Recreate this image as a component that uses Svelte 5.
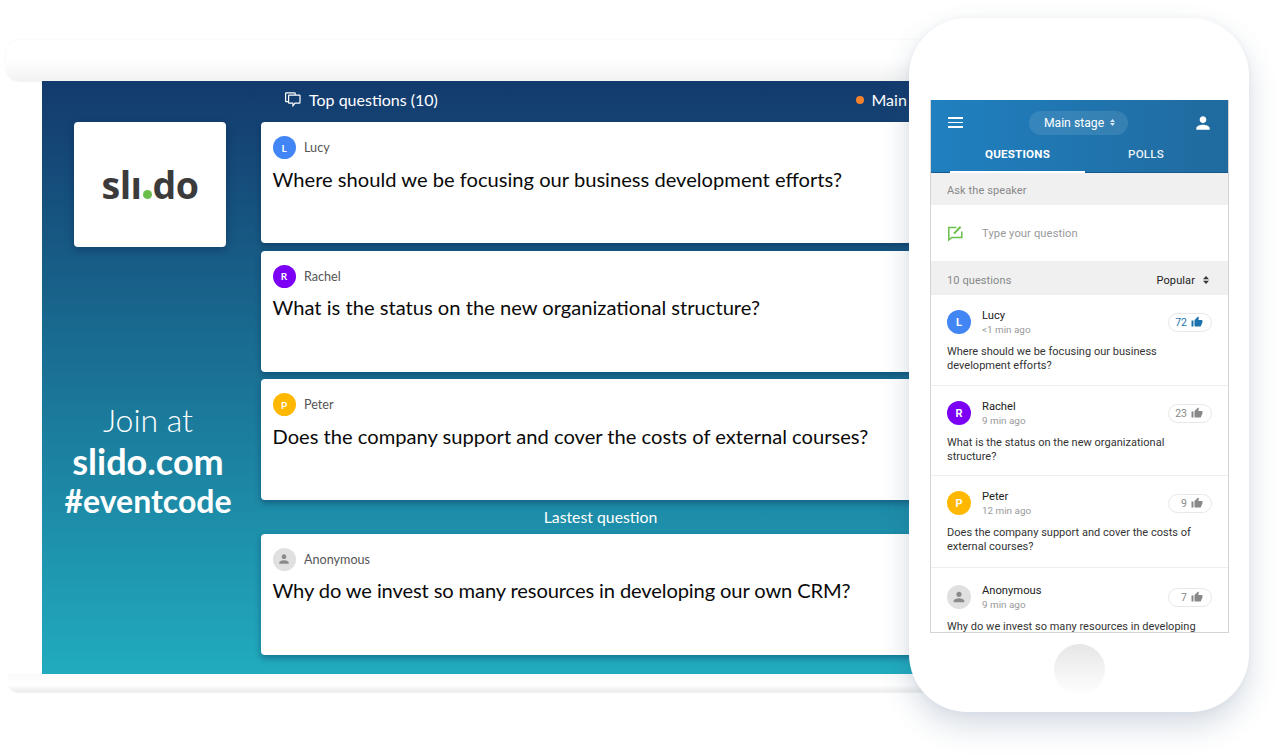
<script>
  const thumb = "M1 21h4V9H1v12zm22-11c0-1.1-.9-2-2-2h-6.31l.95-4.57.03-.32c0-.41-.17-.79-.44-1.06L14.17 1 7.59 7.59C7.22 7.95 7 8.45 7 9v10c0 1.1.9 2 2 2h9c.83 0 1.54-.5 1.84-1.22l3.02-7.05c.09-.23.14-.47.14-.73v-2z";
  const person = "M12 12c2.21 0 4-1.79 4-4s-1.79-4-4-4-4 1.79-4 4 1.79 4 4 4zm0 2c-2.67 0-8 1.34-8 4v2h16v-2c0-2.66-5.33-4-8-4z";
  const top3 = [
    { name: "Lucy", letter: "L", color: "#4285f4", text: "Where should we be focusing our business development efforts?" },
    { name: "Rachel", letter: "R", color: "#7b00f5", text: "What is the status on the new organizational structure?" },
    { name: "Peter", letter: "P", color: "#ffb700", text: "Does the company support and cover the costs of external courses?" }
  ];
  const latest = { name: "Anonymous", letter: "", color: "#e0e0e0", text: "Why do we invest so many resources in developing our own CRM?" };
  const items = [
    { ...top3[0], time: "<1 min ago", votes: 72, on: true, h: 91, pad: 12 },
    { ...top3[1], time: "9 min ago", votes: 23, h: 90, pad: 12 },
    { ...top3[2], time: "12 min ago", votes: 9, h: 92, pad: 12 },
    { ...latest, time: "9 min ago", votes: 7, h: 65, pad: 14 }
  ];
</script>

<div class="stage">
  <div class="laptop">
    <div class="lid"></div>
    <div class="screen">
      <aside class="side">
        <div class="logo"><span class="sl">slı</span><i class="dot"></i><span class="sl">do</span></div>
        <div class="join">
          <div class="light">Join at</div>
          <div class="bold big">slido.com</div>
          <div class="bold">#eventcode</div>
        </div>
      </aside>
      <section class="col">
        <header class="top">
          <span class="title">
            <svg width="16" height="15" viewBox="0 0 16 15" fill="none" stroke="#fff" stroke-width="1.2">
              <path d="M3 9.6H1.2c-.3 0-.6-.3-.6-.6V1.4c0-.3.3-.6.6-.6h8.4c.3 0 .6.3.6.6V3"/>
              <path d="M4.2 3.2h10.2c.3 0 .6.3.6.6v6.8c0 .3-.3.6-.6.6H10l-2 2.6-.2-2.6H4.2c-.3 0-.6-.3-.6-.6V3.8c0-.3.3-.6.6-.6z"/>
            </svg>
            Top questions (10)
          </span>
          <span class="room"><i class="live"></i>Main stage</span>
        </header>
        <div class="stack">
          {#each top3 as q}
            <article class="card">
              <div class="who">
                <span class="av" style="background:{q.color}">{q.letter}</span>
                <span class="nm">{q.name}</span>
              </div>
              <p>{q.text}</p>
            </article>
          {/each}
        </div>
        <div class="last">Lastest question</div>
        <article class="card tight">
          <div class="who">
            <span class="av" style="background:{latest.color}">
              <svg width="14" height="14" viewBox="0 0 24 24" fill="#8a8a8a"><path d={person}/></svg>
            </span>
            <span class="nm">{latest.name}</span>
          </div>
          <p>{latest.text}</p>
        </article>
      </section>
    </div>
    <div class="base"></div>
  </div>

  <div class="phone">
    <div class="display">
      <div class="bar">
        <div class="row1">
          <span class="burger"><i></i><i></i><i></i></span>
          <span class="pill">Main stage <svg width="5" height="7" viewBox="0 0 5 7" fill="#dbe8f3"><path d="M2.5 0 5 3H0zM2.5 7 0 4h5z"/></svg></span>
          <svg width="20" height="20" viewBox="0 0 24 24" fill="#fff"><path d={person}/></svg>
        </div>
        <div class="tabs">
          <span class="tab on">QUESTIONS</span>
          <span class="tab">POLLS</span>
        </div>
      </div>
      <div class="band ask">Ask the speaker</div>
      <div class="input">
        <svg width="17" height="17" viewBox="0 0 17 17" fill="none" stroke="#6abf4b" stroke-width="1.5">
          <path d="M9.5 2.5H1.8v12.4l3-2.4h10V6.5"/>
          <path d="M7 8.6 13.6 1.8" stroke-width="2"/>
        </svg>
        <span>Type your question</span>
      </div>
      <div class="band count"><span>10 questions</span>
        <span class="sort">Popular <svg width="6" height="8" viewBox="0 0 6 8" fill="#333"><path d="M3 0 6 3.2H0zM3 8 0 4.8h6z"/></svg></span>
      </div>
      {#each items as it}
        <div class="item" style="height:{it.h}px;padding-top:{it.pad}px">
          <div class="ihead">
            <span class="pav" style="background:{it.color}">
              {#if it.letter}{it.letter}{:else}<svg width="16" height="16" viewBox="0 0 24 24" fill="#8a8a8a"><path d={person}/></svg>{/if}
            </span>
            <div class="meta">
              <div class="pn">{it.name}</div>
              <div class="pt">{it.time}</div>
            </div>
            <span class="vote" class:on={it.on}>{it.votes}
              <svg width="12" height="12" viewBox="0 0 24 24" fill="currentColor"><path d={thumb}/></svg>
            </span>
          </div>
          <div class="ptext">{it.text}</div>
        </div>
      {/each}
    </div>
    <div class="home"></div>
  </div>
</div>

<style>
  :global(body) { margin: 0; background: #fff; }
  .stage { position: relative; width: 1280px; height: 755px; overflow: hidden; font-family: Lato, sans-serif; background: #fff; }

  .laptop { position: absolute; left: 6px; top: 40px; width: 1000px; display: flex; flex-direction: column; }
  .lid { height: 41px; border-radius: 14px 0 0 12px; background: linear-gradient(#fff 50%, #f2f2f2); box-shadow: 0 0 3px rgba(0,0,0,.05), 4px 1px 1px rgba(0,0,0,.03); }
  .screen { position: relative; margin-left: 36px; height: 593px; display: flex; background: linear-gradient(#133a6d, #21abbe); box-sizing: border-box; padding-left: 32px; }
  .base { margin-left: 2px; height: 18px; border-radius: 0 0 0 10px; background: linear-gradient(#fafafa, #fff 60%, #ebebeb); box-shadow: 0 1px 1px rgba(0,0,0,.06); }

  .side { width: 152px; margin-top: 41px; color: #fff; display: flex; flex-direction: column; align-items: center; flex: none; }
  .logo { width: 100%; height: 125px; background: #fff; border-radius: 4px; box-shadow: 0 3px 8px rgba(0,20,60,.35); display: flex; align-items: baseline; justify-content: center; color: #3b3b3b; }
  .sl { font: 700 37.5px/125px "Open Sans", sans-serif; letter-spacing: -.5px; }
  .dot { width: 9px; height: 9px; border-radius: 50%; background: #6abf4b; margin: 0 1px; }
  .join { margin-top: 153px; margin-right: 4px; text-align: center; font-size: 32px; line-height: 40.5px; white-space: nowrap; }
  .light { font-weight: 300; }
  .bold { font-weight: 700; }
  .big { font-size: 36px; }

  .col { margin-left: 34.5px; width: 680px; flex: none; display: flex; flex-direction: column; }
  .top { height: 41px; display: flex; align-items: center; justify-content: space-between; color: #fff; font-size: 16px; padding: 0 0 4px 24.5px; box-sizing: border-box; }
  .title { display: flex; align-items: center; gap: 8px; }
  .room { display: flex; align-items: center; gap: 8px; margin-right: -31px; width: 116px; white-space: nowrap; }
  .live { width: 8px; height: 8px; border-radius: 50%; background: #f5822a; }
  .stack { display: flex; flex-direction: column; gap: 7.5px; }
  .card { height: 121px; box-sizing: border-box; background: #fff; border-radius: 4px; padding: 14px 12px; box-shadow: 0 3px 6px rgba(0,20,60,.35); }
  .who { display: flex; align-items: center; gap: 8.5px; height: 23px; }
  .av { width: 23px; height: 23px; border-radius: 50%; color: #fff; font-size: 10px; font-weight: 700; display: flex; align-items: center; justify-content: center; }
  .nm { font-size: 12.6px; color: #555; }
  .card p { margin: 6.5px 0 0; font-size: 20.15px; line-height: 27px; color: #0a0a0a; white-space: nowrap; }
  .tight p { letter-spacing: -.13px; }
  .last { height: 33.5px; line-height: 34px; text-align: center; color: #fff; font-size: 15.8px; }

  .phone { position: absolute; left: 909px; top: 18px; width: 340px; height: 694px; box-sizing: border-box; padding: 82px 20px 0 21px; background: #fff; border-radius: 58px; box-shadow: 0 14px 30px rgba(50,80,120,.2), 0 0 6px rgba(50,80,120,.06); display: flex; flex-direction: column; align-items: center; font-family: Roboto, sans-serif; }
  .display { width: 299px; height: 533px; flex: none; overflow: hidden; box-sizing: border-box; border: 1px solid #d4d4d4; border-top: 0; }
  .bar { margin: 0 -1px; height: 73px; background: linear-gradient(90deg, #2080c0, #206a9e); box-shadow: inset 0 -1px #17588c; color: #fff; }
  .row1 { height: 45px; display: flex; align-items: center; justify-content: space-between; padding: 0 16px 0 18px; }
  .burger { display: flex; flex-direction: column; gap: 3px; width: 15px; }
  .burger i { height: 1.7px; background: #fff; }
  .pill { height: 24px; padding: 0 13px 0 15px; border-radius: 12px; background: rgba(255,255,255,.1); font-size: 12.2px; font-weight: 400; display: flex; align-items: center; gap: 6px; margin-left: 1px; }
  .tabs { display: flex; padding-left: 20px; height: 28px; font-size: 11.6px; font-weight: 500; letter-spacing: .2px; }
  .tab { width: 135px; text-align: center; line-height: 18px; opacity: .9; box-sizing: border-box; }
  .tab:nth-child(2) { width: 122px; }
  .tab.on { font-weight: 700; opacity: 1; border-bottom: 2px solid #fff; height: 28px; }
  .band { background: #f0f0f0; font-size: 11px; color: #888; display: flex; align-items: center; padding: 1px 16px 0; letter-spacing: .1px; box-sizing: border-box; }
  .ask { height: 32px; padding-top: 2px; }
  .input { height: 56px; display: flex; align-items: center; gap: 18px; padding: 0 16px; font-size: 11.2px; color: #999; letter-spacing: .1px; }
  .count { height: 34px; justify-content: space-between; padding-right: 19px; padding-top: 4px; }
  .sort { color: #222; display: flex; align-items: center; gap: 8px; }
  .item { box-sizing: border-box; padding: 12px 16px 0 16px; border-bottom: 1px solid #eee; }
  .ihead { display: flex; align-items: center; height: 30px; }
  .pav { width: 24px; height: 24px; border-radius: 50%; color: #fff; font-size: 11px; font-weight: 700; display: flex; align-items: center; justify-content: center; flex: none; }
  .meta { margin-left: 11px; flex: 1; }
  .pn { font-size: 11.2px; line-height: 15px; color: #222; }
  .pt { font-size: 9.9px; line-height: 14px; color: #999; }
  .vote { width: 44px; height: 19px; box-sizing: border-box; border: 1px solid #e8e8e8; border-radius: 10px; display: flex; align-items: center; justify-content: flex-end; gap: 4px; padding-right: 8px; font-size: 10.5px; color: #888; margin-top: 0; }
  .vote.on { color: #1a73ac; }
  .ptext { margin-top: 7.5px; font-size: 11px; line-height: 14.3px; color: #333; letter-spacing: .02px; }
  .home { width: 51px; height: 51px; border-radius: 50%; margin-top: 11px; margin-right: 1px; flex: none; background: linear-gradient(#e6e6e6, #fff); }
</style>
